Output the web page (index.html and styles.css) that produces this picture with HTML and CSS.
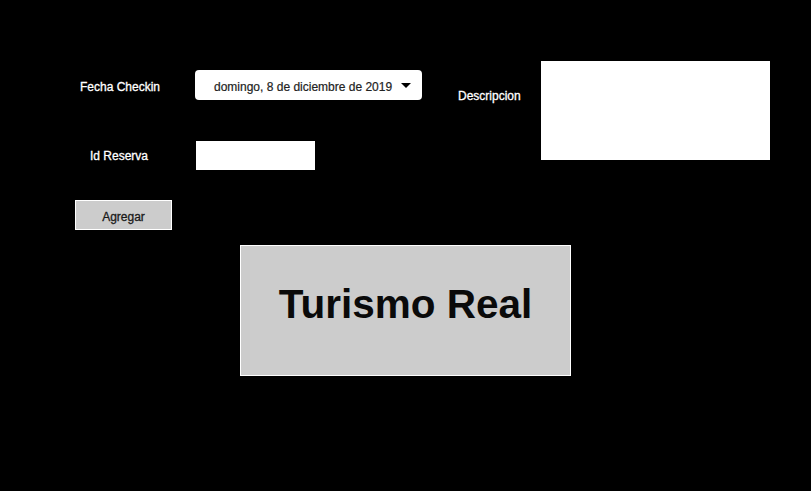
FILE: index.html
```html
<!DOCTYPE html>
<html lang="es">
<head>
<meta charset="utf-8">
<title>Turismo Real</title>
<link rel="stylesheet" href="styles.css">
</head>
<body>
<div class="page">
  <div class="top">
    <div class="left">
      <div class="row row-fecha">
        <label class="lbl lbl-fecha">Fecha Checkin</label>
        <div class="picker">
          <span class="picker-text">domingo, 8 de diciembre de 2019</span>
          <svg class="arrow" width="10" height="5" viewBox="0 0 10 5"><polygon points="0,0 10,0 5,5" fill="#000"/></svg>
        </div>
      </div>
      <div class="row row-id">
        <label class="lbl lbl-id">Id Reserva</label>
        <div class="input-id"></div>
      </div>
      <div class="row row-btn">
        <button class="btn">Agregar</button>
      </div>
    </div>
    <div class="right">
      <label class="lbl lbl-desc">Descripcion</label>
      <div class="desc-box"></div>
    </div>
  </div>
  <div class="banner">Turismo Real</div>
</div>
</body>
</html>
```
FILE: styles.css
```css
html, body {
  margin: 0;
  padding: 0;
  background: #000;
}
.page {
  width: 811px;
  height: 491px;
  background: #000;
  font-family: "Liberation Sans", Arial, sans-serif;
  overflow: hidden;
}
.top {
  display: flex;
  padding-top: 61px;
}
.left {
  display: flex;
  flex-direction: column;
  width: 422px;
}
.row {
  display: flex;
  align-items: center;
}
.lbl {
  color: #fff;
  font-size: 12px;
  line-height: 14px;
  -webkit-text-stroke: 0.3px #fff;
}
.row-fecha {
  margin-top: 9px;
  padding-left: 80px;
}
.lbl-fecha {
  width: 115px;
  padding-top: 3px;
}
.picker {
  width: 227px;
  height: 30px;
  box-sizing: border-box;
  background: #fff;
  border-radius: 4px;
  display: flex;
  align-items: center;
  padding-left: 19px;
}
.picker-text {
  font-size: 12px;
  color: #222;
  width: 187px;
  padding-top: 3px;
  -webkit-text-stroke: 0.2px #222;
}
.arrow {
  display: block;
}
.row-id {
  margin-top: 41px;
  padding-left: 90px;
}
.lbl-id {
  width: 106px;
}
.input-id {
  width: 119px;
  height: 29px;
  background: #fff;
}
.row-btn {
  margin-top: 30px;
  padding-left: 75px;
}
.btn {
  width: 97px;
  height: 30px;
  box-sizing: border-box;
  background: #cccccc;
  border: 1px solid #fff;
  font-family: "Liberation Sans", Arial, sans-serif;
  font-size: 12px;
  color: #1a1a1a;
  padding: 3px 0 0;
  -webkit-text-stroke: 0.3px #1a1a1a;
}
.right {
  display: flex;
  align-items: flex-start;
  padding-left: 36px;
}
.lbl-desc {
  width: 83px;
  margin-top: 28px;
}
.desc-box {
  width: 229px;
  height: 99px;
  background: #fff;
}
.banner {
  margin-top: 15px;
  margin-left: 240px;
  width: 331px;
  height: 131px;
  box-sizing: border-box;
  background: #cccccc;
  border: 1px solid #fff;
  display: flex;
  align-items: center;
  justify-content: center;
  padding-bottom: 12px;
  font-size: 40.5px;
  font-weight: bold;
  color: #0a0a0a;
}
```
